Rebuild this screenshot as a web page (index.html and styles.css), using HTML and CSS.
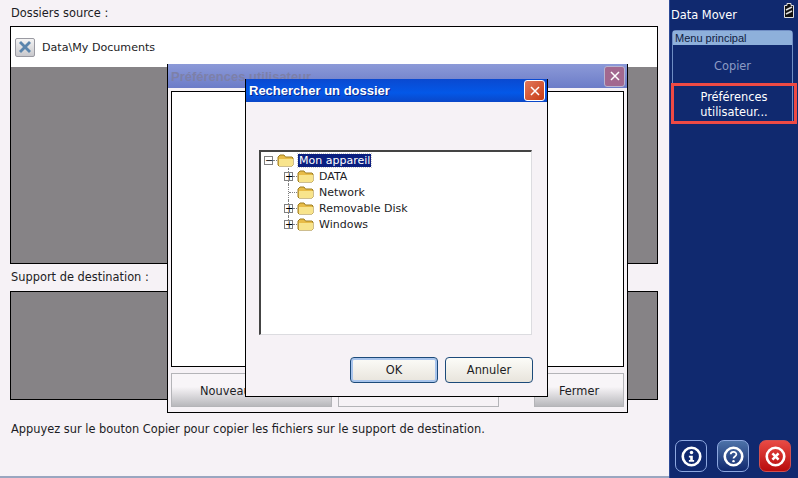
FILE: index.html
```html
<!DOCTYPE html>
<html lang="fr">
<head>
    <meta charset="UTF-8">
    <title>Data Mover</title>
    <link rel="stylesheet" href="styles.css">
</head>
<body>
    <div class="screen">
        <div class="main">
            <div class="label first">Dossiers source :</div>
            <div class="source-box">
                <div class="source-row">
                    <span class="remove-btn">
                        <svg width="16" height="16" viewBox="0 0 16 16"><path d="M2 4 4 2l4 4 4-4 2 2-4 4 4 4-2 2-4-4-4 4-2-2 4-4z" fill="#5a85ad"/></svg>
                    </span>
                    <span>Data\My Documents</span>
                </div>
            </div>
            <div class="label">Support de destination :</div>
            <div class="dest-box"></div>
            <div class="hint">Appuyez sur le bouton Copier pour copier les fichiers sur le support de destination.</div>
        </div>

        <div class="sidebar">
            <div class="side-head">
                <span>Data Mover</span>
                <svg class="battery" width="10" height="15" viewBox="0 0 10 15"><path d="M3 .5h4v2h2.500v12H.5v-12H3z" fill="#111" stroke="#ddd"/><path d="M2 11 8 8M2 7l6-3" stroke="#ddd" stroke-width="1.500"/></svg>
            </div>
            <div class="menu">
                <div class="menu-title">Menu principal</div>
                <div class="menu-item disabled">Copier</div>
                <div class="menu-item selected">Préférences<br>utilisateur...</div>
            </div>
            <div class="side-buttons">
                <span class="round-btn">
                    <svg width="21" height="21" viewBox="0 0 24 24"><circle cx="12" cy="12" r="10" fill="none" stroke="#fff" stroke-width="3"/><circle cx="12" cy="7.500" r="2" fill="#fff"/><path d="M9 11h4.500v5H15v2H9v-2h1.500v-3H9z" fill="#fff"/></svg>
                </span>
                <span class="round-btn help">
                    <svg width="21" height="21" viewBox="0 0 24 24"><circle cx="12" cy="12" r="10" fill="none" stroke="#fff" stroke-width="3"/><path d="M8.800 9.500C9 5.800 15.500 6 15.300 9.800c-.1 2.200-3.300 2.400-3.300 4.500" fill="none" stroke="#fff" stroke-width="2"/><circle cx="12" cy="17.300" r="1.400" fill="#fff"/></svg>
                </span>
                <span class="round-btn close">
                    <svg width="21" height="21" viewBox="0 0 24 24"><circle cx="12" cy="12" r="10" fill="none" stroke="#fff" stroke-width="3"/><path d="M8.500 8.500l7 7M15.500 8.500l-7 7" stroke="#fff" stroke-width="3"/></svg>
                </span>
            </div>
        </div>

        <div class="prefs-dialog">
            <div class="prefs-title">
                <span>Préférences utilisateur</span>
                <span class="x-btn faded">
                    <svg width="12" height="12" viewBox="0 0 12 12"><path d="M2 2l8 8M10 2l-8 8" stroke="#fff" stroke-width="1.500"/></svg>
                </span>
            </div>
            <div class="prefs-body"></div>
            <div class="prefs-buttons">
                <div class="grey-btn new-btn">Nouveau</div>
                <div class="grey-btn blank-btn"></div>
                <div class="grey-btn close-btn">Fermer</div>
            </div>
        </div>

        <div class="folder-dialog">
            <div class="folder-title">
                <span>Rechercher un dossier</span>
                <span class="x-btn">
                    <svg width="12" height="12" viewBox="0 0 12 12"><path d="M2 2l8 8M10 2l-8 8" stroke="#fff" stroke-width="1.500"/></svg>
                </span>
            </div>
            <div class="folder-body">
                <div class="tree">
                    <div class="tree-row">
                        <span class="expander">−</span>
                        <svg class="folder" width="17" height="13" viewBox="0 0 17 13"><path d="M1 3 3 1h4l1.500 2H15l1 1v7l-1 1H2l-1-1z" fill="#e8bc48" stroke="#9c7c20"/><path d="M2 5h14v6l-1 1H2z" fill="#f8e48c"/></svg>
                        <span class="node-text current">Mon appareil</span>
                    </div>
                    <div class="tree-row child">
                        <span class="expander">+</span>
                        <svg class="folder" width="17" height="13" viewBox="0 0 17 13"><path d="M1 3 3 1h4l1.500 2H15l1 1v7l-1 1H2l-1-1z" fill="#e8bc48" stroke="#9c7c20"/><path d="M2 5h14v6l-1 1H2z" fill="#f8e48c"/></svg>
                        <span class="node-text">DATA</span>
                    </div>
                    <div class="tree-row child">
                        <span class="expander none"></span>
                        <svg class="folder" width="17" height="13" viewBox="0 0 17 13"><path d="M1 3 3 1h4l1.500 2H15l1 1v7l-1 1H2l-1-1z" fill="#e8bc48" stroke="#9c7c20"/><path d="M2 5h14v6l-1 1H2z" fill="#f8e48c"/></svg>
                        <span class="node-text">Network</span>
                    </div>
                    <div class="tree-row child">
                        <span class="expander">+</span>
                        <svg class="folder" width="17" height="13" viewBox="0 0 17 13"><path d="M1 3 3 1h4l1.500 2H15l1 1v7l-1 1H2l-1-1z" fill="#e8bc48" stroke="#9c7c20"/><path d="M2 5h14v6l-1 1H2z" fill="#f8e48c"/></svg>
                        <span class="node-text">Removable Disk</span>
                    </div>
                    <div class="tree-row child last">
                        <span class="expander">+</span>
                        <svg class="folder" width="17" height="13" viewBox="0 0 17 13"><path d="M1 3 3 1h4l1.500 2H15l1 1v7l-1 1H2l-1-1z" fill="#e8bc48" stroke="#9c7c20"/><path d="M2 5h14v6l-1 1H2z" fill="#f8e48c"/></svg>
                        <span class="node-text">Windows</span>
                    </div>
                </div>
                <div class="folder-buttons">
                    <div class="xp-btn default">OK</div>
                    <div class="xp-btn">Annuler</div>
                </div>
            </div>
        </div>
    </div>
</body>
</html>
```

FILE: styles.css
```css
body, html {
    margin: 0;
    padding: 0;
    height: 100%;
    font-family: 'DejaVu Sans', sans-serif;
    font-size: 11.4px;
    color: #1c1c24;
    overflow: hidden;
}
.screen {
    width: 798px;
    height: 478px;
    display: flex;
    position: relative;
    overflow: hidden;
    background: #f6f2f6;
}
.main {
    width: 648px;
    height: 470px;
    padding: 6px 11px 0 10px;
    border-bottom: 2px solid #9aa6c0;
}
.label {
    height: 15px;
    line-height: 15px;
    padding-left: 1px;
    margin-top: 6px;
}
.label.first {
    margin-top: 0;
    margin-bottom: 5px;
}
.source-box {
    height: 236px;
    border: 1px solid #000;
    background: #868386;
}
.source-row {
    height: 40px;
    background: #fff;
    display: flex;
    align-items: center;
    gap: 7px;
    padding-left: 4px;
    font-size: 11.1px;
}
.remove-btn {
    width: 18px;
    height: 17px;
    border: 1px solid #9a9aa2;
    border-radius: 2px;
    background: linear-gradient(#f4f4f4, #c8c8cc);
    display: flex;
    align-items: center;
    justify-content: center;
}
.dest-box {
    height: 107px;
    margin-top: 6px;
    border: 1px solid #000;
    background: #868386;
}
.hint {
    margin-top: 22px;
    padding-left: 1px;
    line-height: 15px;
}
.sidebar {
    flex: 1;
    background: #10296f;
    color: #fff;
    border-left: 1px solid #2c4a96;
    display: flex;
    flex-direction: column;
    padding: 0 2px;
}
.side-head {
    height: 30px;
    display: flex;
    justify-content: space-between;
    padding: 8px 2px 0 0;
    line-height: 15px;
    box-sizing: border-box;
    margin-left: -1px;
}
.side-head .battery {
    margin-top: -5px;
}
.menu {
    border: 1px solid #6f8dc4;
    border-bottom: 0;
    border-radius: 4px 4px 0 0;
    margin-right: 3px;
}
.menu-title {
    height: 14px;
    line-height: 14px;
    font-family: 'Liberation Sans', sans-serif;
    font-size: 11px;
    background: #8eb0db;
    color: #10203f;
    padding-left: 2px;
}
.menu-item {
    text-align: center;
    line-height: 15px;
}
.menu-item.disabled {
    height: 38px;
    line-height: 43px;
    color: #8c9bc4;
}
.menu-item.selected {
    height: 33px;
    margin: 0 -5px 0 -2px;
    padding-top: 2px;
    border: 3px solid #ee4a44;
    display: flex;
    align-items: center;
    justify-content: center;
}
.side-buttons {
    margin-top: auto;
    display: flex;
    gap: 10px;
    padding: 0 0 6px 3px;
}
.round-btn {
    width: 30px;
    height: 30px;
    border: 1px solid #8ea8e0;
    border-radius: 7px;
    display: flex;
    align-items: center;
    justify-content: center;
}
.round-btn.help {
    background: linear-gradient(#4d72a8, #10296f);
}
.round-btn.close {
    background: linear-gradient(#e84a44, #b80c0c);
    border-color: #d05050;
}
.x-btn {
    width: 19px;
    height: 19px;
    border: 1px solid #fff;
    border-radius: 3px;
    background: linear-gradient(135deg, #e2785c, #c73c14);
    display: flex;
    align-items: center;
    justify-content: center;
}
.x-btn.faded {
    background: #a2688f;
    border-color: #b8b4d0;
}

/* dialogs sit over the page */
.prefs-dialog {
    position: absolute;
    left: 167px;
    top: 64px;
    width: 459px;
    height: 348px;
    border: 1px solid #000;
    border-top: 0;
    background: #f6f2f6;
}
.prefs-title {
    height: 24px;
    background: linear-gradient(#8c9ad8, #6c7cc8);
    color: #7d80a8;
    font-family: 'Liberation Sans', sans-serif;
    font-size: 13px;
    font-weight: bold;
    display: flex;
    justify-content: space-between;
    align-items: center;
    padding: 0 2px 0 3px;
}
.prefs-body {
    height: 274px;
    margin: 3px 3px 0 3px;
    border: 1px solid #000;
    background: #fff;
}
.prefs-buttons {
    display: flex;
    margin: 6px 3px 0 3px;
}
.grey-btn {
    height: 32px;
    line-height: 34px;
    text-align: center;
    border: 1px solid #b4b4b8;
    background: linear-gradient(#f8f5f8 40%, #b8b8bc);
}
.new-btn {
    width: 131px;
    padding-left: 28px;
    text-align: left;
}
.blank-btn {
    width: 159px;
    margin-left: 6px;
    background: #f6f2f6;
}
.close-btn {
    width: 88px;
    margin-left: 35px;
}
.folder-dialog {
    position: absolute;
    left: 245px;
    top: 79px;
    width: 301px;
    height: 317px;
    border: 1px solid #000;
    border-top: 0;
    background: #f6f2f6;
}
.folder-title {
    height: 23px;
    background: linear-gradient(#0a49d0, #0358e8 60%, #0a47c8);
    color: #fff;
    font-family: 'Liberation Sans', sans-serif;
    font-weight: bold;
    font-size: 13px;
    text-shadow: 1px 1px #0a2a90;
    display: flex;
    justify-content: space-between;
    align-items: center;
    padding: 0 2px 0 3px;
}
.folder-body {
    padding: 48px 15px 0 13px;
}
.tree {
    height: 182px;
    border: 1px solid #dcdce0;
    border-top: 2px solid #444;
    border-left: 2px solid #444;
    background: #fff;
    font-size: 11px;
}
.tree-row {
    height: 16px;
    display: flex;
    align-items: center;
    gap: 2px;
    padding-left: 3px;
    position: relative;
}
.tree-row.child {
    padding-left: 23px;
}
/* dotted tree lines */
.tree-row.child::before {
    content: "";
    position: absolute;
    left: 27px;
    top: 0;
    height: 16px;
    border-left: 1px dotted #808080;
}
.tree-row.child.last::before {
    height: 8px;
}
.expander {
    width: 7px;
    height: 7px;
    border: 1px solid #808080;
    background: #fff;
    font-size: 10px;
    line-height: 7px;
    text-align: center;
    color: #000;
    margin-right: 2px;
    position: relative;
    z-index: 1;
}
.expander::after {
    content: "";
    position: absolute;
    left: 8px;
    top: 3px;
    width: 4px;
    border-top: 1px dotted #808080;
}
.expander.none {
    border-color: transparent;
    background: none;
}
.expander.none::after {
    left: 4px;
    width: 8px;
}
.node-text {
    padding: 0 1px;
    margin-left: 2px;
}
.node-text.current {
    background: #0a1f80;
    color: #fff;
    outline: 1px dotted #ccc;
}
.folder-buttons {
    display: flex;
    justify-content: flex-end;
    gap: 7px;
    margin-top: 22px;
    margin-right: -1px;
}
.xp-btn {
    width: 86px;
    height: 24px;
    line-height: 24px;
    text-align: center;
    border: 1px solid #1c4a7a;
    border-radius: 4px;
    background: linear-gradient(#fcfcf8, #e8e4dc);
}
.xp-btn.default {
    box-shadow: inset 0 0 0 2px #a8c4ec;
}
```
